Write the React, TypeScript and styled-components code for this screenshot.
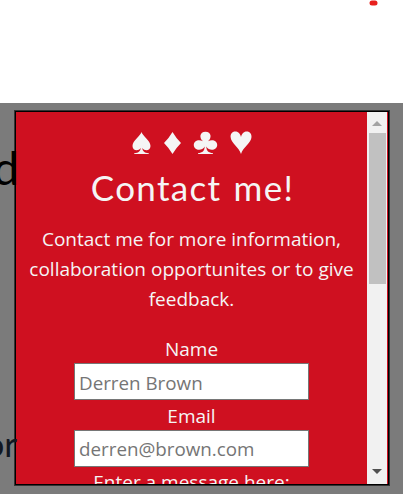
import React from "react";
import styled, { createGlobalStyle } from "styled-components";

const GlobalStyle = createGlobalStyle`
  * { box-sizing: border-box; }
  body { margin: 0; background: #fff; overflow: hidden; }
`;

const Page = styled.main`
  position: relative;
  display: flex;
  flex-direction: column;
  width: 403px;
  height: 494px;
  overflow: hidden;
  font-family: "Open Sans", "Noto Sans", sans-serif;
`;

const Header = styled.header`
  height: 103px;
  flex: none;
  display: flex;
  justify-content: flex-end;
  padding-right: 25px;
`;

const Mark = styled.svg`
  width: 10px;
  height: 8px;
`;

const Overlay = styled.section`
  flex: 1;
  min-height: 0;
  display: flex;
  padding: 7px 13px 8px 14px;
  background: #7b7b7b;
`;

const Behind = styled.span<{ $top: number; $right: number; $size: number; $color: string }>`
  position: absolute;
  z-index: 1;
  top: ${(p) => p.$top}px;
  right: ${(p) => p.$right}px;
  font: 400 ${(p) => p.$size}px/1 Lato, sans-serif;
  color: ${(p) => p.$color};
`;

const Dialog = styled.div`
  position: relative;
  flex: 1;
  display: flex;
  min-width: 0;
  min-height: 0;
  border: 1px solid #333;
  box-shadow: inset 0 0 0 1px #000;
  padding: 1px;
  overflow: hidden;
  background: #cf1020;
`;

const Content = styled.div`
  flex: 1;
  min-width: 0;
  display: flex;
  flex-direction: column;
  align-items: center;
  overflow: hidden;
  color: #f5f5f5;
  text-align: center;
`;

const Suits = styled.svg`
  width: 120px;
  height: 24px;
  margin-top: 19px;
  flex: none;
  fill: #f5f5f5;
`;

const Title = styled.h1`
  margin: 12px 0 0;
  padding-left: 2px;
  font: 400 35px/40px Lato, sans-serif;
  letter-spacing: 1.3px;
  word-spacing: 2px;
  white-space: nowrap;
  flex: none;
`;

const Intro = styled.p`
  margin: 17px 0 0;
  font-size: 19px;
  line-height: 30px;
  white-space: nowrap;
  flex: none;
`;

const Line = styled.span`
  display: block;
`;

const Form = styled.form`
  margin-top: 20px;
  display: flex;
  flex-direction: column;
  align-items: center;
  flex: none;
`;

const Label = styled.label`
  font-size: 19px;
  line-height: 30px;
  height: 29px;
  white-space: nowrap;
`;

const LastLabel = styled(Label)`
  line-height: 28px;
`;

const Input = styled.input<{ $nudge?: number }>`
  width: 235px;
  height: 37px;
  margin-bottom: 1px;
  padding: ${(p) => 2 + (p.$nudge ?? 0)}px 4px ${(p) => 2 - (p.$nudge ?? 0)}px;
  border: 1px solid #767676;
  border-radius: 0;
  background: #fff;
  font: 18.8px "Open Sans", "Noto Sans", sans-serif;
  &::placeholder { color: #757575; opacity: 1; }
`;

const Scrollbar = styled.div`
  width: 20px;
  margin-right: 1px;
  display: flex;
  flex-direction: column;
  align-items: center;
  background: #f1f1f1;
`;

const Arrow = styled.svg`
  width: 20px;
  height: 21px;
  flex: none;
`;

const Track = styled.div`
  flex: 1;
`;

const Thumb = styled.div`
  width: 17px;
  height: 151px;
  background: #c1c1c1;
`;

export default function App() {
  return (
    <Page>
      <GlobalStyle />
      <Header>
        <Mark viewBox="0 0 10 8">
          <rect x="1.5" y="0.5" width="8" height="5" rx="2.5" fill="#e8201d" />
        </Mark>
      </Header>
      <Overlay>
        <Behind $top={145} $right={384} $size={46} $color="#000">d</Behind>
        <Behind $top={426} $right={386} $size={35} $color="#111722">or</Behind>
        <Dialog>
          <Content>
            <Suits viewBox="0 0 120 24" aria-label="Card suits">
              <path d="M9.5 1 C10.5 5 18.5 9.5 18.5 15 C18.5 20 12.5 20.5 10.3 17 C10.5 20 12 21.8 16.8 22.2 V23 H2.2 V22.2 C7 21.8 8.500 20 8.700 17 C6.500 20.500 0.500 20 0.500 15 C0.500 9.500 8.500 5 9.500 1Z" />
              <path d="M40.5 1 Q44 7 49 12 Q44 17 40.5 23 Q37 17 32 12 Q37 7 40.5 1Z" />
              <path d="M73.500 0.700 C79.500 0.700 80 7 76 10.300 C80.500 7.800 85.200 10 85.200 14 C85.200 19.500 77 20.500 74.300 15.500 C74.500 20 76.500 21.800 81 22.200 V23 H66 V22.200 C70.500 21.800 72.500 20 72.700 15.500 C70 20.500 61.800 19.500 61.800 14 C61.800 10 66.500 7.800 71 10.300 C67 7 67.500 0.700 73.500 0.700Z" />
              <path d="M109 6 C110 2 112.300 0.500 114.800 0.500 C118 0.500 119.700 3 119.500 6 C119.200 12 111 16 109 23 C107 16 98.900 12 98.600 6 C98.400 3 100 0.500 103.200 0.500 C105.800 0.500 108 2 109 6Z" />
            </Suits>
            <Title>Contact me!</Title>
            <Intro>
              <Line>Contact me for more information,</Line>
              <Line>collaboration opportunites or to give</Line>
              <Line>feedback.</Line>
            </Intro>
            <Form>
              <Label htmlFor="name">Name</Label>
              <Input id="name" placeholder="Derren Brown" $nudge={1} />
              <Label htmlFor="email">Email</Label>
              <Input id="email" placeholder="derren@brown.com" />
              <LastLabel>Enter a message here:</LastLabel>
            </Form>
          </Content>
          <Scrollbar>
            <Arrow viewBox="0 0 20 21"><path d="M5 14 L10 9 L15 14Z" fill="#a3a3a3" /></Arrow>
            <Thumb />
            <Track />
            <Arrow viewBox="0 0 20 21"><path d="M5 6 L15 6 L10 11Z" fill="#505050" /></Arrow>
          </Scrollbar>
        </Dialog>
      </Overlay>
    </Page>
  );
}
